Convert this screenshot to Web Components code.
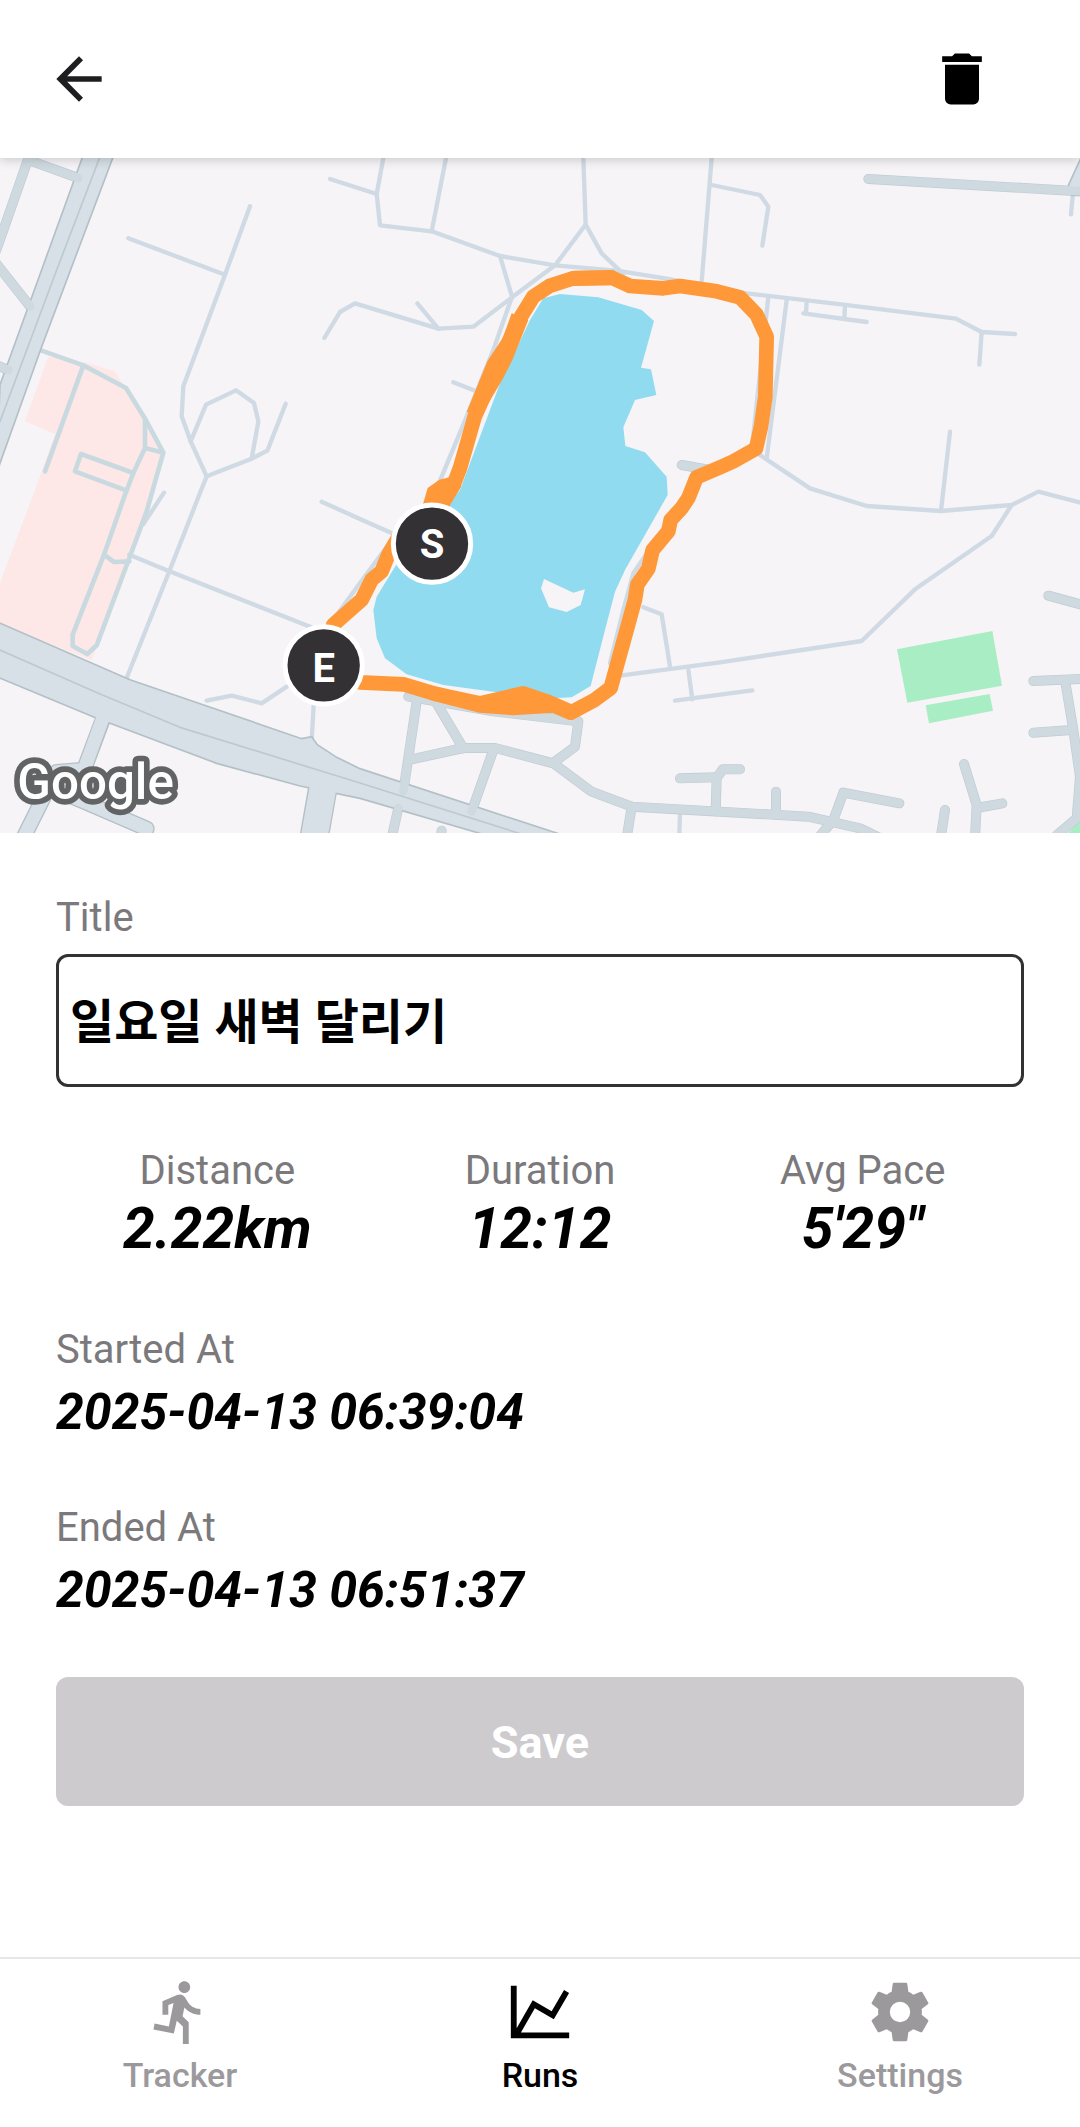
<!DOCTYPE html>
<html lang="ko">
<head>
<meta charset="utf-8">
<meta name="viewport" content="width=device-width, initial-scale=1">
<title>Run detail</title>
<style>
    body {
        margin: 0;
        background: #ffffff;
        color: #000000;
        font-family: Roboto, "Noto Sans CJK KR", sans-serif;
    }
</style>
</head>
<body>

<run-detail></run-detail>

<script>

// attaches an open shadow root filled with the given markup
function render(host, templateString) {
    const template = document.createElement('template');
    template.innerHTML = templateString;

    const shadowRoot = host.attachShadow({mode:"open"});
    shadowRoot.appendChild(template.content.cloneNode(true));
    return shadowRoot;
}

const ICONS = {
    back: 'M20,11H7.83l5.59,-5.59L12,4l-8,8 8,8 1.41,-1.41L7.83,13H20v-2z',
    trash: 'M19,4H15.5L14.5,3H9.5L8.5,4H5V6H19M6,19A2,2 0 0,0 8,21H16A2,2 0 0,0 18,19V7H6V19Z',
    run: 'M13.49 5.48c1.1 0 2-.9 2-2s-.9-2-2-2-2 .9-2 2 .9 2 2 2zm-3.6 13.9l1-4.4 2.1 2v6h2v-7.5l-2.1-2 .6-3c1.3 1.5 3.3 2.5 5.5 2.5v-2c-1.9 0-3.5-1-4.3-2.4l-1-1.6c-.4-.6-1-1-1.7-1-.3 0-.5.1-.8.1l-5.2 2.2v4.7h2v-3.4l1.8-.7-1.6 8.1-4.9-1-.4 2 7 1.4z',
    chart: 'M16,11.78L20.24,4.45L21.97,5.45L16.74,14.5L10.23,10.75L5.46,19H22V21H2V3H4V17.54L9.5,8L16,11.78Z',
    cog: 'M12,15.5A3.5,3.5 0 0,1 8.5,12A3.5,3.5 0 0,1 12,8.5A3.5,3.5 0 0,1 15.5,12A3.5,3.5 0 0,1 12,15.5M19.43,12.97C19.47,12.65 19.5,12.33 19.5,12C19.5,11.67 19.47,11.34 19.43,11L21.54,9.37C21.73,9.22 21.78,8.95 21.66,8.73L19.66,5.27C19.54,5.05 19.27,4.96 19.05,5.05L16.56,6.05C16.04,5.66 15.5,5.32 14.87,5.07L14.5,2.42C14.46,2.18 14.25,2 14,2H10C9.75,2 9.54,2.18 9.5,2.42L9.13,5.07C8.5,5.32 7.96,5.66 7.44,6.05L4.95,5.05C4.73,4.96 4.46,5.05 4.34,5.27L2.34,8.73C2.21,8.95 2.27,9.22 2.46,9.37L4.57,11C4.53,11.34 4.5,11.67 4.5,12C4.5,12.33 4.53,12.65 4.57,12.97L2.46,14.63C2.27,14.78 2.21,15.05 2.34,15.27L4.34,18.73C4.46,18.95 4.73,19.03 4.95,18.95L7.44,17.94C7.96,18.34 8.5,18.68 9.13,18.93L9.5,21.58C9.54,21.82 9.75,22 10,22H14C14.25,22 14.46,21.82 14.5,21.58L14.87,18.93C15.5,18.67 16.04,18.34 16.56,17.94L19.05,18.95C19.27,19.03 19.54,18.95 19.66,18.73L21.66,15.27C21.78,15.05 21.73,14.78 21.54,14.63L19.43,12.97Z'
};

class AppIcon extends HTMLElement {
    constructor(){
        super();

        render(this, `
            <style>
                :host {
                    display: block;
                    width: 68px;
                    height: 68px;
                }
                svg {
                    display: block;
                    width: 100%;
                    height: 100%;
                    fill: currentColor;
                }
            </style>
            <svg viewBox="0 0 24 24" aria-hidden="true"><path d="${ICONS[this.getAttribute('name')]}"/></svg>
        `);
    }
}

class IconButton extends HTMLElement {
    constructor(){
        super();

        render(this, `
            <style>
                :host {
                    display: block;
                }
                button {
                    display: block;
                    margin: 0;
                    padding: 0;
                    border: 0;
                    background: none;
                    color: inherit;
                    cursor: pointer;
                }
            </style>
            <button type="button" aria-label="${this.getAttribute('label')}">
                <app-icon name="${this.getAttribute('icon')}"></app-icon>
            </button>
        `);
    }
}

class AppHeader extends HTMLElement {
    constructor(){
        super();

        render(this, `
            <style>
                :host {
                    display: block;
                    position: relative;
                    z-index: 1;
                    background: #ffffff;
                    box-shadow: 0 2px 10px rgba(0, 0, 0, 0.18);
                }
                header {
                    display: flex;
                    align-items: center;
                    justify-content: space-between;
                    padding: 45px 84px 45px 45px;
                }
                ::slotted([slot="start"]) {
                    color: #1e1e20;
                }
            </style>
            <header>
                <slot name="start"></slot>
                <slot name="end"></slot>
            </header>
        `);
    }
}

class RouteMap extends HTMLElement {
    constructor(){
        super();

        // narrow footpaths
        const paths = [
            '430,1098 492,1004',
            '388,1190 508,1240 940,1410',
            '750,145 675,350 550,685 545,775 572,850 620,955 600,1005 508,1240 380,1560',
            '385,241 675,350',
            '572,850 618,740 708,697 762,735 775,790 755,902',
            '620,955 755,902 802,878 857,737',
            '973,540 1020,462 1065,436 1315,512 1420,506 1540,415 1665,322 1757,200 1805,286 1870,348',
            '1252,436 1315,512',
            '1750,0 1757,200',
            '990,63 1130,108',
            '1150,0 1130,108 1140,202 1295,220 1500,294 1665,322 1850,338 2000,362 2240,406 2530,440 2868,482 2945,522 3045,528',
            '2945,522 2938,620',
            '1338,0 1295,220',
            '1500,294 1536,416 1480,576 1400,776 1315,980',
            '1360,673 1425,698',
            '2135,0 2105,370',
            '2135,81 2280,111 2305,146 2287,263',
            '2305,416 2260,830',
            '2360,426 2300,901',
            '2420,431 2418,463',
            '2410,466 2600,492',
            '2535,441 2533,482',
            '2850,821 2823,1059',
            '2280,891 2430,991 2600,1044 2823,1059 3035,1041 3115,1001 3250,1036',
            '3035,1041 2975,1134 2745,1294 2585,1449 2160,1513 1860,1553',
            '1930,1348 1985,1369 2010,1526',
            '2065,1536 2077,1624',
            '2025,1628 2160,1610 2257,1597',
            '965,1031 1080,1083 1190,1132',
            '620,1628 695,1613 785,1636 860,1586',
            '943,1600 935,1750',
            '1000,1385 1080,1275 1180,1140',
            '1995,1106 1900,1246 1870,1356 1830,1516',
            '2040,1966 2038,2030',
            '3218,116 3213,169'
        ];

        // paths inside the hospital block
        const blockPaths = [
            '125,578 250,622 378,690 435,782 490,884 440,1060 388,1200 290,1462 262,1488 218,1464 218,1430 312,1190 375,1010 400,945 435,870 490,884',
            '435,870 435,782',
            '250,622 135,940',
            '400,945 243,888 225,940 380,998',
            '312,1190 342,1212 388,1210'
        ];

        // residential streets
        const streets = [
            '90,8 235,60',
            '82,10 0,245 -20,300',
            '-10,318 90,445',
            '-10,622 25,636',
            '2045,921 2130,936',
            '1225,1616 1480,1660 1735,1690 1725,1766 1660,1814',
            '1250,1631 1210,1900',
            '1310,1636 1390,1771',
            '1235,1804 1390,1770 1485,1770 1660,1816 1775,1901 1895,1946 2160,1961 2425,1976 2580,2011 2640,2040',
            '1480,1776 1415,1960',
            '1895,1946 1880,2040',
            '2040,1861 2150,1858',
            '2220,1834 2168,1834 2150,1860 2147,1960',
            '2328,1901 2328,1970',
            '2698,1936 2530,1904 2500,1986 2455,2040',
            '2835,1956 2822,2040',
            '2892,1818 2930,1941 2925,2040',
            '2930,1950 3007,1936',
            '3145,1313 3260,1344',
            '3100,1569 3260,1562',
            '3195,1566 3220,1716 3240,1856 3230,1981 3170,2032',
            '3100,1724 3215,1716',
            '2605,63 3210,98 3260,100',
            '1195,1950 1175,2040',
            '1325,2018 1322,2040'
        ];

        // the recorded run, from the start marker round the lake to the end marker
        const track = [
            '1305,1140 1312,1015 1360,982 1380,930 1400,860 1424,776 1500,606 1563,476 1600,416 1650,383 1720,361 1835,359 1890,384 1990,391 2040,384 2150,400 2220,418 2270,470 2300,536 2296,716 2283,806 2268,872 2200,910 2160,928 2090,958 2065,1020 2045,1050 2012,1086 2005,1120 1958,1176 1945,1232 1912,1280 1905,1325 1880,1416 1832,1590 1785,1625 1712,1664 1660,1642 1540,1650 1440,1642 1300,1606 1210,1579 1080,1573 980,1530',
            '1300,1606 1440,1636 1570,1606 1640,1630 1712,1661',
            '1200,1130 1165,1190 1145,1240 1115,1265 1085,1325 1000,1400'
        ];

        const lines = (list) => list.map((points) => `<polyline points="${points}"/>`).join('');

        render(this, `
            <style>
                :host {
                    display: block;
                }
                svg {
                    display: block;
                    width: 100%;
                    aspect-ratio: 8 / 5;
                    background: #f6f4f6;
                }
                polyline {
                    fill: none;
                    stroke-linecap: round;
                    stroke-linejoin: round;
                }
                .paths { stroke: #cfdae4; stroke-width: 13; }
                .block-paths { stroke: #c8dae0; stroke-width: 14; }
                .street-edge { stroke: #bfccd4; stroke-width: 30; }
                .street { stroke: #cfdae0; stroke-width: 26; }
                .road { fill: #d7e0e6; stroke: #b3c0c7; stroke-width: 5; }
                .side-edge { stroke: #b3c0c7; }
                .side { stroke: #d7e0e6; }
                .centre { stroke: #bdc9d0; stroke-width: 5; }
                .block { fill: #fee8e7; }
                .park { fill: #a8edc4; }
                .lake { fill: #91dbf0; }
                .track { stroke: #ff9838; stroke-width: 44; }
                .track polygon { fill: #ff9838; stroke: none; }
                .marker circle { fill: #333133; stroke: #ffffff; stroke-width: 15; }
                .marker text {
                    fill: #ffffff;
                    font-size: 120px;
                    font-weight: 700;
                    text-anchor: middle;
                }
                .logo {
                    fill: #ffffff;
                    stroke: #626365;
                    stroke-width: 34;
                    stroke-linejoin: round;
                    paint-order: stroke;
                    font: 500 148px Roboto, sans-serif;
                }
            </style>
            <svg viewBox="0 0 3240 2025" role="img" aria-label="Route map">
                <polygon class="block" points="145,596 260,614 345,640 375,690 495,880 460,996 385,1206 300,1446 275,1506 0,1401 0,1276 105,996 165,828 75,790"/>
                <polygon class="park" points="2691,1474 2977,1419 3006,1583 2722,1634"/>
                <polygon class="park" points="2777,1642 2969,1608 2979,1658 2787,1696"/>
                <polygon class="park" points="3205,2025 3240,1985 3240,2025"/>
                <g class="paths">${lines(paths)}</g>
                <g class="block-paths">${lines(blockPaths)}</g>

                <g class="street-edge">${lines(streets)}</g>
                <g class="side-edge">
                    <polyline stroke-width="48" points="310,1680 252,1835 170,1842"/>
                    <polyline stroke-width="48" points="160,1860 60,2060"/>
                    <polyline stroke-width="48" points="140,1885 250,1930 440,2012"/>
                    <polyline stroke-width="88" points="972,1870 935,2080"/>
                </g>
                <polygon class="road" points="250,-10 90,432 0,680 -10,946 0,916 125,566 342,-10"/>
                <polygon class="road" points="3205,82 3245,-5 3250,112 3215,112"/>
                <polygon class="road" points="-10,1391 390,1565 905,1742 935,1736 952,1760 1010,1798 1080,1832 1700,2035 1470,2035 1080,1921 900,1884 650,1816 290,1681 -10,1556"/>
                <g class="street">${lines(streets)}</g>
                <g class="side">
                    <polyline stroke-width="40" points="316,1660 252,1835 170,1842"/>
                    <polyline stroke-width="40" points="160,1860 60,2060"/>
                    <polyline stroke-width="40" points="140,1885 250,1930 440,2012"/>
                    <polyline stroke-width="80" points="976,1850 935,2080"/>
                </g>
                <g class="centre">
                    <polyline points="300,-4 170,336 0,790"/>
                    <polyline points="0,1476 300,1608 540,1708 1080,1875 1570,2030"/>
                </g>

                <polygon class="lake" points="1680,408 1795,418 1925,456 1962,489 1923,629 1953,634 1969,711 1905,726 1870,808 1876,864 1935,883 2000,956 2003,1011 1875,1236 1845,1301 1815,1416 1772,1584 1715,1618 1660,1621 1480,1601 1330,1581 1220,1549 1155,1501 1130,1441 1120,1356 1130,1316 1185,1226 1380,996 1500,676 1590,486 1630,421"/>
                <polygon fill="#f6f4f6" points="1632,1263 1720,1304 1755,1294 1742,1341 1700,1362 1647,1348 1623,1291"/>

                <g class="track">
                    ${lines(track)}
                    <polygon points="1400,762 1462,610 1508,540 1535,466 1585,486 1537,606 1510,660 1444,772"/>
                    <polygon points="1283,990 1318,965 1360,955 1384,985 1345,1050 1268,1042"/>
                    <polygon points="1640,366 1720,338 1840,336 1890,370 1830,382 1720,384"/>
                </g>

                <g class="marker">
                    <circle cx="1296" cy="1157" r="116"/>
                    <text x="1296" y="1200">S</text>
                </g>
                <g class="marker">
                    <circle cx="971" cy="1522" r="116"/>
                    <text x="971" y="1571">E</text>
                </g>
                <text class="logo" x="52" y="1924">Google</text>
            </svg>
        `);
    }
}

class TextField extends HTMLElement {
    constructor(){
        super();

        const shadowRoot = render(this, `
            <style>
                :host {
                    display: flex;
                    flex-direction: column;
                    gap: 12px;
                }
                label {
                    color: #7b797c;
                    font-size: 40px;
                    line-height: 48px;
                }
                input {
                    box-sizing: border-box;
                    width: 100%;
                    height: 133px;
                    margin: 0;
                    padding: 0 11px 6px;
                    border: 3px solid #343134;
                    border-radius: 12px;
                    background: #ffffff;
                    color: #000000;
                    font-family: inherit;
                    font-size: 48px;
                    font-weight: 700;
                }
            </style>
            <label for="field"></label>
            <input id="field" type="text">
        `);

        shadowRoot.querySelector('label').textContent = this.getAttribute('label');
        shadowRoot.querySelector('input').value = this.getAttribute('value');
    }
}

// label over a bold italic value, centered when used as a column
class RunStat extends HTMLElement {
    constructor(){
        super();

        render(this, `
            <style>
                :host {
                    display: flex;
                    flex-direction: column;
                    gap: 8px;
                }
                :host([centered]) {
                    flex: 1;
                    align-items: center;
                    gap: 2px;
                }
                .label {
                    color: #7b797c;
                    font-size: 40px;
                    line-height: 48px;
                }
                .value {
                    font-size: 50px;
                    font-style: italic;
                    font-weight: 700;
                    line-height: 60px;
                }
                :host([centered]) .value {
                    font-size: 57px;
                    line-height: 64px;
                }
            </style>
            <div class="label">${this.getAttribute('label')}</div>
            <div class="value"><slot></slot></div>
        `);
    }
}

class SaveButton extends HTMLElement {
    constructor(){
        super();

        render(this, `
            <style>
                :host {
                    display: block;
                }
                button {
                    display: block;
                    width: 100%;
                    height: 129px;
                    margin: 0;
                    padding: 2px 0 0;
                    border: 0;
                    border-radius: 12px;
                    background: #cdcbce;
                    color: #ffffff;
                    font-family: inherit;
                    font-size: 45px;
                    font-weight: 700;
                }
            </style>
            <button type="button" disabled><slot></slot></button>
        `);
    }
}

class TabItem extends HTMLElement {
    constructor(){
        super();

        render(this, `
            <style>
                :host {
                    display: block;
                    flex: 1;
                    color: #9b999c;
                }
                :host([active]) {
                    color: #000000;
                }
                a {
                    display: flex;
                    flex-direction: column;
                    align-items: center;
                    gap: 8px;
                    color: inherit;
                    font-size: 34px;
                    font-weight: 500;
                    line-height: 40px;
                    text-decoration: none;
                }
                app-icon {
                    width: 70px;
                    height: 70px;
                }
            </style>
            <a href="#${this.getAttribute('icon')}">
                <app-icon name="${this.getAttribute('icon')}"></app-icon>
                <span><slot></slot></span>
            </a>
        `);
    }
}

class TabBar extends HTMLElement {
    constructor(){
        super();

        render(this, `
            <style>
                :host {
                    display: block;
                    border-top: 2px solid #e6e5e8;
                    background: #ffffff;
                }
                nav {
                    display: flex;
                    padding: 18px 0 32px;
                }
            </style>
            <nav><slot></slot></nav>
        `);
    }
}

class RunDetail extends HTMLElement {
    constructor(){
        super();

        render(this, `
            <style>
                :host {
                    display: flex;
                    flex-direction: column;
                    min-height: 100vh;
                }
                main {
                    padding: 61px 56px 56px;
                }
                .stats {
                    display: flex;
                    margin-top: 60px;
                }
                .times {
                    display: flex;
                    flex-direction: column;
                    gap: 62px;
                    margin: 65px 0 57px;
                }
                tab-bar {
                    margin-top: auto;
                }
            </style>

            <app-header>
                <icon-button slot="start" icon="back" label="Back"></icon-button>
                <icon-button slot="end" icon="trash" label="Delete run"></icon-button>
            </app-header>

            <route-map></route-map>

            <main>
                <text-field label="Title" value="일요일 새벽 달리기"></text-field>

                <div class="stats">
                    <run-stat centered label="Distance">2.22km</run-stat>
                    <run-stat centered label="Duration">12:12</run-stat>
                    <run-stat centered label="Avg Pace">5'29"</run-stat>
                </div>

                <div class="times">
                    <run-stat label="Started At">2025-04-13 06:39:04</run-stat>
                    <run-stat label="Ended At">2025-04-13 06:51:37</run-stat>
                </div>

                <save-button>Save</save-button>
            </main>

            <tab-bar>
                <tab-item icon="run">Tracker</tab-item>
                <tab-item icon="chart" active>Runs</tab-item>
                <tab-item icon="cog">Settings</tab-item>
            </tab-bar>
        `);
    }
}

customElements.define("app-icon",AppIcon);
customElements.define("icon-button",IconButton);
customElements.define("app-header",AppHeader);
customElements.define("route-map",RouteMap);
customElements.define("text-field",TextField);
customElements.define("run-stat",RunStat);
customElements.define("save-button",SaveButton);
customElements.define("tab-item",TabItem);
customElements.define("tab-bar",TabBar);
customElements.define("run-detail",RunDetail);

</script>
</body>
</html>
